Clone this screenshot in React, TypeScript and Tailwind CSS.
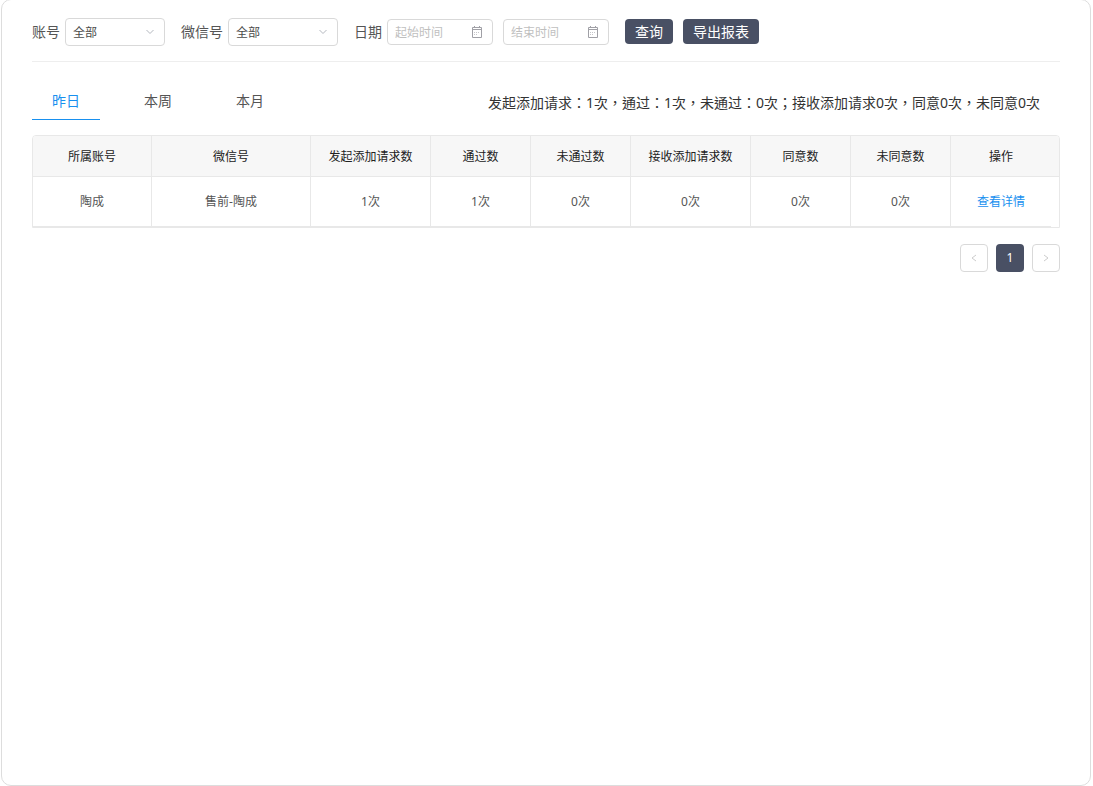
import { useState } from "react";

interface ReportRow {
  account: string;
  wechat: string;
  counts: number[];
}

const tabs = ["昨日", "本周", "本月"];

const columns = [
  { title: "所属账号", width: "w-[119px]" },
  { title: "微信号", width: "w-[159px]" },
  { title: "发起添加请求数", width: "w-[120px]" },
  { title: "通过数", width: "w-[100px]" },
  { title: "未通过数", width: "w-[100px]" },
  { title: "接收添加请求数", width: "w-[120px]" },
  { title: "同意数", width: "w-[100px]" },
  { title: "未同意数", width: "w-[100px]" },
  { title: "操作", width: "w-[100px]" },
];

const rows: ReportRow[] = [
  { account: "陶成", wechat: "售前-陶成", counts: [1, 1, 0, 0, 0, 0] },
];

function Chevron({ d, className }: { d: string; className: string }) {
  return (
    <svg viewBox="0 0 10 10" className={className} fill="none" stroke="currentColor" aria-hidden="true">
      <path d={d} />
    </svg>
  );
}

function FilterSelect({ id, label, width }: { id: string; label: string; width: string }) {
  return (
    <div className="flex items-center gap-[5px]">
      <label htmlFor={id}>{label}</label>
      <div className={`relative ${width}`}>
        <select
          id={id}
          className="block h-7 w-full appearance-none rounded border border-[#d9d9d9] bg-white pl-[7px] pr-6 pt-[2px] text-xs text-[#4c4c4c] outline-none"
        >
          <option>全部</option>
        </select>
        <Chevron
          d="M1.5 3 L5 6.5 L8.5 3"
          className="pointer-events-none absolute right-[10px] top-[9px] h-[10px] w-[10px] text-[#b4b8bf]"
        />
      </div>
    </div>
  );
}

function DateInput({ id, placeholder }: { id: string; placeholder: string }) {
  return (
    <div className="relative w-[106px]">
      <input
        id={id}
        type="text"
        aria-label={placeholder}
        placeholder={placeholder}
        className="block h-[26px] w-full rounded border border-[#d9d9d9] bg-white pl-[7px] pr-6 text-xs text-[#4c4c4c] outline-none placeholder:text-[#bfbfbf]"
      />
      <svg
        viewBox="0 0 12 12"
        className="pointer-events-none absolute right-[10px] top-[7px] h-3 w-3 text-[#a0a0a6]"
        fill="none"
        stroke="currentColor"
        aria-hidden="true"
      >
        <path d="M1.5 1.5 H10.5 V11.5 H1.5 Z M1.5 3.5 H10.5 M3.5 0 V1 M8.5 0 V1" />
        <path d="M3 6.5 H9 M3 8.5 H7" strokeDasharray="1 1" opacity="0.6" />
      </svg>
    </div>
  );
}

export default function App() {
  const [activeTab, setActiveTab] = useState("昨日");

  return (
    <div className="min-h-screen bg-white pl-px pr-[2px] font-['Noto_Sans','Noto_Sans_CJK_SC',sans-serif] text-sm text-[#555555]">
      <main className="-mt-px min-h-[calc(100vh+1px)] rounded-[10px] border border-[#dddddd] px-[30px] pt-[18px]">
        {/* Filters */}
        <form
          className="flex items-center border-b border-[#eeeeee] pb-[15px]"
          onSubmit={(e) => e.preventDefault()}
        >
          <div className="flex items-center gap-4">
            <FilterSelect id="account" label="账号" width="w-[100px]" />
            <FilterSelect id="wechat" label="微信号" width="w-[110px]" />
            <div className="flex items-center gap-[5px]">
              <label htmlFor="start">日期</label>
              <div className="flex gap-[10px]">
                <DateInput id="start" placeholder="起始时间" />
                <DateInput id="end" placeholder="结束时间" />
              </div>
            </div>
            <div className="flex gap-[10px] pb-px">
              <button type="submit" className="h-[25px] rounded bg-[#495064] px-[10px] text-white">
                查询
              </button>
              <button type="button" className="h-[25px] rounded bg-[#495064] px-[10px] text-white">
                导出报表
              </button>
            </div>
          </div>
        </form>

        {/* Period tabs and summary */}
        <div className="mt-5 flex items-center justify-between">
          <div className="flex gap-6" role="tablist">
            {tabs.map((tab) => (
              <button
                key={tab}
                type="button"
                role="tab"
                aria-selected={activeTab === tab}
                onClick={() => setActiveTab(tab)}
                className={`h-[38px] w-[68px] border-b ${
                  activeTab === tab ? "border-[#1890ef] text-[#1890ef]" : "border-transparent"
                }`}
              >
                {tab}
              </button>
            ))}
          </div>
          <p className="pr-5 pt-[3px] font-['Noto_Sans','Noto_Sans_CJK_TC',sans-serif] text-[#333333]">
            发起添加请求：1次，通过：1次，未通过：0次；接收添加请求0次，同意0次，未同意0次
          </p>
        </div>

        {/* Report table */}
        <div className="mt-[15px] overflow-hidden rounded-t border border-[#e8e8e8]">
          <table className="w-full table-fixed border-separate border-spacing-0 text-center text-xs">
            <colgroup>
              {columns.map((col) => (
                <col key={col.title} className={col.width} />
              ))}
              <col className="w-2" />
            </colgroup>
            <thead className="bg-[#f7f7f7] text-[#222222]">
              <tr>
                {columns.map((col) => (
                  <th
                    key={col.title}
                    className="h-[41px] border-b border-r border-[#e8e8e8] pt-[2px] font-normal last-of-type:border-r-0"
                  >
                    {col.title}
                  </th>
                ))}
                <td className="border-b border-[#e8e8e8]" />
              </tr>
            </thead>
            <tbody>
              {rows.map((row) => (
                <tr key={row.wechat}>
                  <td className="h-[50px] border-b border-r border-[#e8e8e8]">{row.account}</td>
                  <td className="border-b border-r border-[#e8e8e8]">{row.wechat}</td>
                  {row.counts.map((count, idx) => (
                    <td key={idx} className="border-b border-r border-[#e8e8e8]">
                      {`${count}次`}
                    </td>
                  ))}
                  <td className="border-b border-[#e8e8e8]">
                    <a href="#detail" className="text-[#1890ef]">
                      查看详情
                    </a>
                  </td>
                  <td />
                </tr>
              ))}
            </tbody>
          </table>
        </div>

        {/* Pagination */}
        <nav className="mt-4 flex justify-end gap-2 text-xs" aria-label="分页">
          <button
            type="button"
            disabled
            aria-label="上一页"
            className="flex h-7 w-7 items-center justify-center rounded border border-[#d9d9d9] text-[#cccccc]"
          >
            <Chevron d="M7 2 L3 5 L7 8" className="h-[10px] w-[10px]" />
          </button>
          <button type="button" className="h-7 w-7 rounded bg-[#495064] text-white">
            1
          </button>
          <button
            type="button"
            disabled
            aria-label="下一页"
            className="flex h-7 w-7 items-center justify-center rounded border border-[#d9d9d9] text-[#cccccc]"
          >
            <Chevron d="M3 2 L7 5 L3 8" className="h-[10px] w-[10px]" />
          </button>
        </nav>
      </main>
    </div>
  );
}
